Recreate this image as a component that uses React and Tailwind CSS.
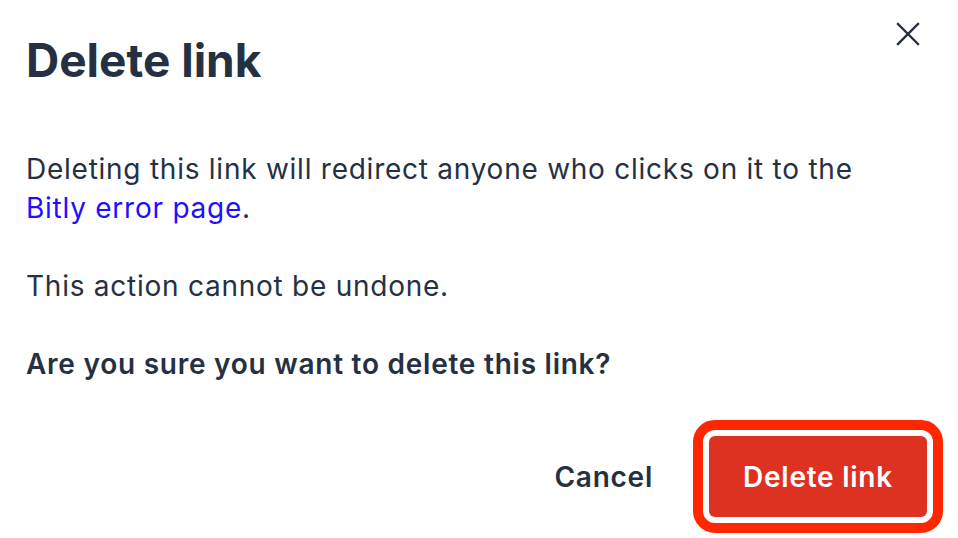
import React from "react";

// Delete link confirmation dialog
function App() {
  return (
    <div
      className="relative h-[538px] w-[958px] bg-white pl-[26px] pr-[15px] text-[#263043]"
      style={{ fontFamily: "Inter, 'Noto Sans', sans-serif" }}
    >
      <div className="flex items-start justify-between pt-[30px]">
        <h2 className="text-[46px] font-bold leading-[60px]">Delete link</h2>
        <button className="mr-[19px] mt-[-12px] p-1 text-[#263043]">
          <svg
            xmlns="http://www.w3.org/2000/svg"
            fill="none"
            viewBox="0 0 24 24"
            strokeWidth="2.4"
            stroke="currentColor"
            className="h-[24px] w-[24px]"
          >
            <path strokeLinecap="square" d="M2 2l20 20M22 2L2 22" />
          </svg>
        </button>
      </div>

      <div className="mt-[60px] space-y-[39px] pr-[40px] text-[28px] leading-[39px] tracking-[0.75px]">
        <p>
          Deleting this link will redirect anyone who clicks on it to the{" "}
          <a href="#" className="text-[#1f0fff]">
            Bitly error page
          </a>
          .
        </p>
        <p>This action cannot be undone.</p>
        <p className="font-semibold">Are you sure you want to delete this link?</p>
      </div>

      <div className="mt-[36px] flex items-center justify-end gap-[40px] tracking-[0.75px]">
        <button className="text-[28px] font-semibold">Cancel</button>
        <div className="rounded-[22px] border-[10px] border-[#ff2600] p-[6px]">
          <button className="flex h-[81px] w-[218px] items-center justify-center rounded-[6px] bg-[#dd3222] text-[28px] font-semibold text-white">
            Delete link
          </button>
        </div>
      </div>
    </div>
  );
}

export default App;
